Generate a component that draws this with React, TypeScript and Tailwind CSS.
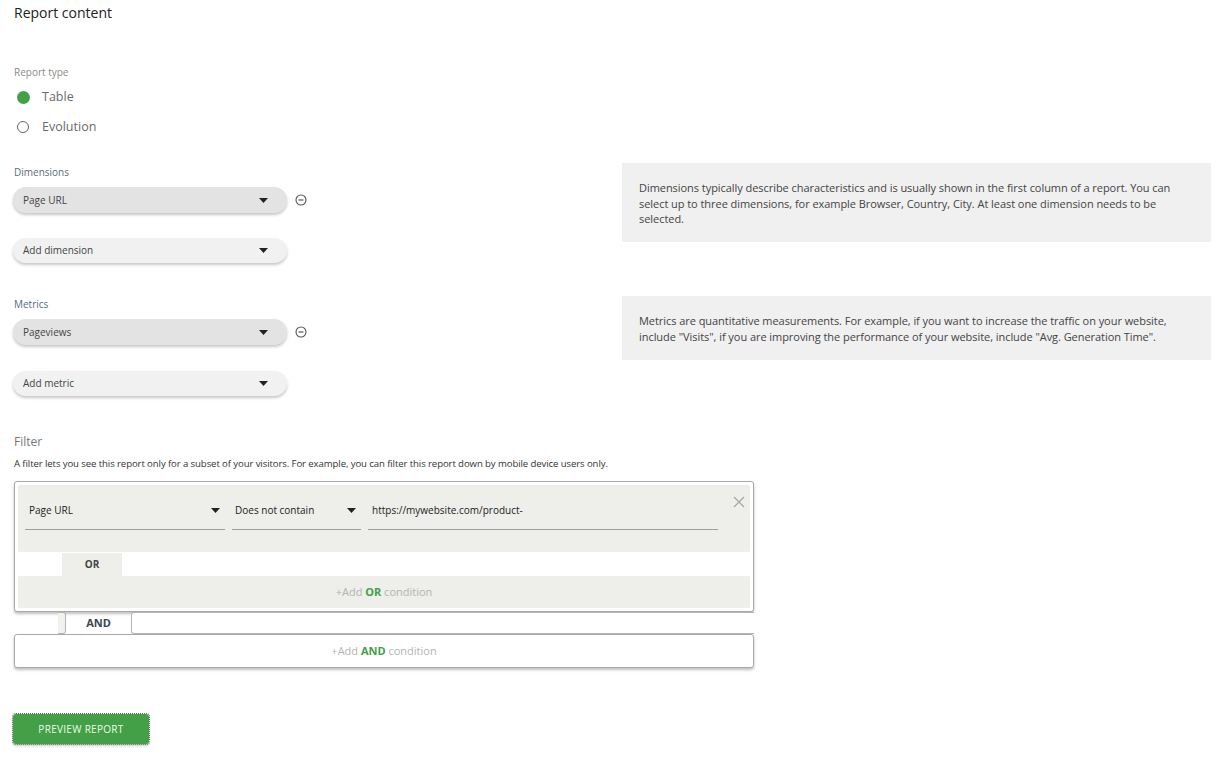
import React from "react";

const font = { fontFamily: '"Open Sans", "Noto Sans", sans-serif' };

function Caret({ className = "" }: { className?: string }) {
  return (
    <svg width="9" height="5" viewBox="0 0 9 5" className={className}>
      <path d="M0 0h9L4.5 5z" fill="#222" />
    </svg>
  );
}

function MinusCircle() {
  return (
    <svg width="12" height="12" viewBox="0 0 12 12" className="ml-[8px]">
      <circle cx="6" cy="6" r="5" fill="none" stroke="#555" strokeWidth="1.1" />
      <path d="M3.5 6h5" stroke="#555" strokeWidth="1.2" />
    </svg>
  );
}

function Pill({ label, filled, h = "h-[26px]" }: { label: string; filled?: boolean; h?: string }) {
  return (
    <div
      className={`${h} w-[274px] rounded-full flex items-center justify-between pl-[10px] pr-[19px] text-[10px] text-[#444] shadow-[0_2px_3px_rgba(0,0,0,0.22)] ${
        filled ? "bg-[#e3e3e3]" : "bg-[#f1f1f1]"
      }`}
    >
      <span>{label}</span>
      <Caret />
    </div>
  );
}

function Info({ children, h }: { children: React.ReactNode; h: string }) {
  return (
    <div
      className={`${h} w-[589px] bg-[#f0f0f0] px-[17px] pt-[17px] text-[11px] leading-[15.5px] text-[#444] tracking-[-0.05px]`}
    >
      {children}
    </div>
  );
}

export default function App() {
  return (
    <div style={font} className="min-h-[758px] bg-white pl-[14px] pt-[4px] text-[#333]">
      <h1 className="text-[14px] leading-[18px] text-[#212121]">Report content</h1>

      <p className="mt-[43px] text-[10px] leading-[14px] text-[#8a8a8a]">Report type</p>
      <div className="mt-[3px]">
        <div className="flex h-[30px] items-center">
          <span className="ml-[3px] h-[13px] w-[13px] rounded-full bg-[#43a047]" />
          <span className="ml-[12px] text-[12.5px] text-[#6b6b6b]">Table</span>
        </div>
        <div className="flex h-[30px] items-center">
          <span className="ml-[3px] h-[12px] w-[12px] rounded-full border-[1.5px] border-[#666]" />
          <span className="ml-[13px] text-[12.5px] text-[#6b6b6b]">Evolution</span>
        </div>
      </div>

      <div className="mt-[21px] flex">
        <div className="w-[608px]">
          <p className="mt-[2px] text-[10px] leading-[14px] text-[#5c6b7a]">Dimensions</p>
          <div className="mt-[8px] -ml-[1px] flex items-center">
            <Pill label="Page URL" filled />
            <MinusCircle />
          </div>
          <div className="mt-[25px] -ml-[1px]">
            <Pill label="Add dimension" h="h-[25px]" />
          </div>
        </div>
        <Info h="h-[79px]">
          Dimensions typically describe characteristics and is usually shown in the first column of a
          report. You can select up to three dimensions, for example Browser, Country, City. At least one
          dimension needs to be selected.
        </Info>
      </div>

      <div className="mt-[33px] flex">
        <div className="w-[608px]">
          <p className="mt-[1px] text-[10px] leading-[14px] text-[#5c6b7a]">Metrics</p>
          <div className="mt-[8px] -ml-[1px] flex items-center">
            <Pill label="Pageviews" filled />
            <MinusCircle />
          </div>
          <div className="mt-[26px] -ml-[1px]">
            <Pill label="Add metric" h="h-[25px]" />
          </div>
        </div>
        <Info h="h-[64px]">
          Metrics are quantitative measurements. For example, if you want to increase the traffic on your
          website, include "Visits", if you are improving the performance of your website, include "Avg.
          Generation Time".
        </Info>
      </div>

      <p className="mt-[38px] text-[12px] leading-[16px] text-[#777]">Filter</p>
      <p className="mt-[7px] text-[9.6px] leading-[14px] text-[#333] tracking-[-0.1px]">
        A filter lets you see this report only for a subset of your visitors. For example, you can filter
        this report down by mobile device users only.
      </p>

      <div className="mt-[10px] w-[740px]">
        <div className="rounded-[3px] border border-[#a9a9a9] bg-white p-[3px] shadow-[0_2px_3px_rgba(0,0,0,0.25)]">
          <div className="relative flex h-[67px] items-start gap-[7px] rounded-[2px] bg-[#eeeeea] pl-[7px] pt-[15px]">
            <div className="flex h-[30px] w-[200px] items-start justify-between border-b border-[#9e9e9e] pl-[4px] pr-[5px] pt-[4px]">
              <span className="text-[10px] leading-[12px] text-[#222]">Page URL</span>
              <Caret className="mt-[4px]" />
            </div>
            <div className="flex h-[30px] w-[129px] items-start justify-between border-b border-[#9e9e9e] pl-[3px] pr-[5px] pt-[4px]">
              <span className="text-[10px] leading-[12px] text-[#222]">Does not contain</span>
              <Caret className="mt-[4px]" />
            </div>
            <div className="h-[30px] w-[350px] border-b border-[#9e9e9e] pl-[4px] pt-[4px] text-[10px] leading-[12px] text-[#222]">
              https://mywebsite.com/product-
            </div>
            <svg width="12" height="12" viewBox="0 0 12 12" className="absolute right-[5px] top-[11px]">
              <path d="M1 1l10 10M11 1L1 11" stroke="#a5a5a5" strokeWidth="1.2" />
            </svg>
          </div>
          <div className="flex h-[24px] pt-[1px]">
            <div className="ml-[44px] flex w-[60px] items-center justify-center bg-[#eeeeea] text-[10px] font-bold text-[#444]">
              OR
            </div>
          </div>
          <div className="flex h-[32px] items-center justify-center rounded-[2px] bg-[#eeeeea] text-[11px] text-[#b3b3b3]">
            +Add&nbsp;<b className="text-[#43a047]">OR</b>&nbsp;condition
          </div>
        </div>

        <div className="flex h-[22px]">
          <div className="ml-[44px] h-full w-[8px] rounded-r-[3px] border border-l-0 border-[#b5b5b5] bg-[#f1f1ee]" />
          <div className="flex w-[65px] items-center justify-center text-[11px] font-bold text-[#37474f]">
            AND
          </div>
          <div className="h-full flex-1 rounded-l-[3px] border border-r-0 border-[#b5b5b5] bg-white" />
        </div>

        <div className="flex h-[34px] items-center justify-center rounded-[3px] border border-[#a9a9a9] bg-white text-[11px] text-[#b3b3b3] shadow-[0_2px_3px_rgba(0,0,0,0.25)]">
          +Add&nbsp;<b className="text-[#43a047]">AND</b>&nbsp;condition
        </div>
      </div>

      <button className="mt-[46px] -ml-[1px] flex h-[30px] w-[136px] items-center justify-center rounded-[3px] bg-[#43a047] text-[10px] uppercase tracking-[0.3px] text-[#eefbe9] outline outline-1 outline-dotted outline-[#666] shadow-[0_2px_3px_rgba(0,0,0,0.2)]">
        Preview report
      </button>
    </div>
  );
}
